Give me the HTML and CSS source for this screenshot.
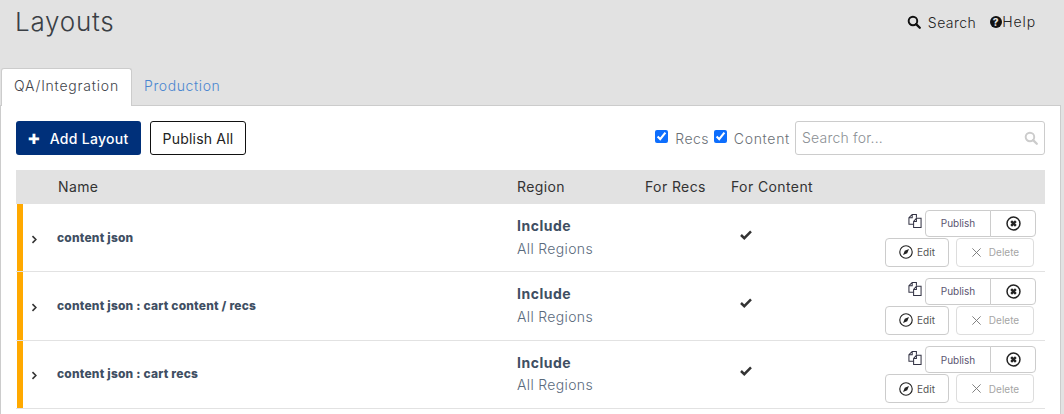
FILE: index.html
```html
<!DOCTYPE html>
<html lang="en">
<head>
<meta charset="utf-8">
<title>Layouts</title>
<link rel="stylesheet" href="styles.css">
</head>
<body>
<svg class="defs" width="0" height="0" aria-hidden="true">
  <defs>
    <symbol id="i-search" viewBox="0 0 16 16"><circle cx="6.8" cy="6.8" r="4.9" fill="none" stroke="currentColor" stroke-width="2.2"/><path d="M10.4 10.4L14.6 14.6" stroke="currentColor" stroke-width="2.6" stroke-linecap="round"/></symbol>
    <symbol id="i-copy" viewBox="0 0 15 16"><path d="M9 4.5V1H4.5L1 4.5v7h5M4.5 1v3.5H1" fill="none" stroke="currentColor" stroke-width="1.1"/><path d="M9 5h5v10H6V8.5zM9 5v3.5H6" fill="none" stroke="currentColor" stroke-width="1.1"/></symbol>
    <symbol id="i-xc" viewBox="0 0 16 16"><circle cx="8" cy="8" r="6.9" fill="none" stroke="currentColor" stroke-width="1.6"/><path d="M5.5 5.5l5 5M10.5 5.5l-5 5" stroke="currentColor" stroke-width="2.6"/></symbol>
    <symbol id="i-edit" viewBox="0 0 16 16"><circle cx="8" cy="8" r="7.1" fill="none" stroke="currentColor" stroke-width="1.3"/><path d="M11.4 4.6L9.4 9.4 4.6 11.4 6.6 6.6z" fill="currentColor"/></symbol>
    <symbol id="i-x" viewBox="0 0 12 12"><path d="M1.5 1.5l9 9M10.5 1.5l-9 9" stroke="currentColor" stroke-width="1" fill="none"/></symbol>
    <symbol id="i-check" viewBox="0 0 12 10"><path d="M1 5l3.3 3.2L11 1.4" fill="none" stroke="currentColor" stroke-width="2.5"/></symbol>
    <symbol id="i-chev" viewBox="0 0 6 8"><path d="M1.2 1l3 3-3 3" fill="none" stroke="currentColor" stroke-width="1.4"/></symbol>
  </defs>
</svg>

<header class="top">
  <h1 class="title">Layouts</h1>
  <nav class="top-links">
    <a class="top-link"><svg class="ico-search"><use href="#i-search"/></svg>Search</a>
    <a class="top-link help"><span class="help-ico">?</span>Help</a>
  </nav>
</header>

<div class="tabs">
  <div class="tab active">QA/Integration</div>
  <div class="tab">Production</div>
</div>

<main class="panel">
  <div class="toolbar">
    <button class="btn primary"><span class="plus">✚</span>Add Layout</button>
    <button class="btn outline">Publish All</button>
    <div class="filters">
      <input type="checkbox" class="chk" checked aria-label="Recs"><span class="chk-label recs">Recs</span>
      <input type="checkbox" class="chk" checked aria-label="Content"><span class="chk-label content">Content</span>
      <div class="search-box"><span>Search for...</span><svg class="ico-sb"><use href="#i-search"/></svg></div>
    </div>
  </div>

  <div class="table">
    <div class="row head">
      <div></div><div class="head-name">Name</div><div>Region</div><div>For Recs</div><div>For Content</div><div></div>
    </div>

    <div class="row item">
      <div class="chev-cell"><svg class="chev"><use href="#i-chev"/></svg></div>
      <div class="name">content json</div>
      <div class="region"><b>Include</b><span>All Regions</span></div>
      <div></div>
      <div class="check-cell"><svg class="check"><use href="#i-check"/></svg></div>
      <div class="actions">
        <div class="act-line">
          <svg class="copy"><use href="#i-copy"/></svg>
          <button class="mini pub">Publish</button><button class="mini xbtn"><svg class="xc"><use href="#i-xc"/></svg></button>
        </div>
        <div class="act-line second">
          <button class="mini edit"><svg class="ed"><use href="#i-edit"/></svg>Edit</button>
          <button class="mini del"><svg class="dx"><use href="#i-x"/></svg>Delete</button>
        </div>
      </div>
    </div>

    <div class="row item">
      <div class="chev-cell"><svg class="chev"><use href="#i-chev"/></svg></div>
      <div class="name">content json : cart content / recs</div>
      <div class="region"><b>Include</b><span>All Regions</span></div>
      <div></div>
      <div class="check-cell"><svg class="check"><use href="#i-check"/></svg></div>
      <div class="actions">
        <div class="act-line">
          <svg class="copy"><use href="#i-copy"/></svg>
          <button class="mini pub">Publish</button><button class="mini xbtn"><svg class="xc"><use href="#i-xc"/></svg></button>
        </div>
        <div class="act-line second">
          <button class="mini edit"><svg class="ed"><use href="#i-edit"/></svg>Edit</button>
          <button class="mini del"><svg class="dx"><use href="#i-x"/></svg>Delete</button>
        </div>
      </div>
    </div>

    <div class="row item">
      <div class="chev-cell"><svg class="chev"><use href="#i-chev"/></svg></div>
      <div class="name">content json : cart recs</div>
      <div class="region"><b>Include</b><span>All Regions</span></div>
      <div></div>
      <div class="check-cell"><svg class="check"><use href="#i-check"/></svg></div>
      <div class="actions">
        <div class="act-line">
          <svg class="copy"><use href="#i-copy"/></svg>
          <button class="mini pub">Publish</button><button class="mini xbtn"><svg class="xc"><use href="#i-xc"/></svg></button>
        </div>
        <div class="act-line second">
          <button class="mini edit"><svg class="ed"><use href="#i-edit"/></svg>Edit</button>
          <button class="mini del"><svg class="dx"><use href="#i-x"/></svg>Delete</button>
        </div>
      </div>
    </div>
  </div>
</main>
</body>
</html>
```
FILE: styles.css
```css
* { box-sizing: border-box; }
html, body { margin: 0; height: 414px; overflow: hidden; }
body {
  width: 1064px;
  background: #e2e2e2;
  font-family: "Inter", "Liberation Sans", sans-serif;
  font-size: 14px;
  color: #333;
}
.defs { position: absolute; }
button { font-family: inherit; cursor: pointer; }

.top { height: 68px; display: flex; justify-content: space-between; padding: 5px 28px 0 15px; }
.title { margin: 0; font-size: 26px; font-weight: 300; line-height: 34px; color: #3a3f45; letter-spacing: .75px; }
.top-links { display: flex; gap: 14px; padding-top: 7px; height: 27px; align-items: center; }
.top-link { display: flex; align-items: center; font-size: 14px; color: #222; font-weight: 300; letter-spacing: .45px; }
.ico-search { width: 14px; height: 14px; margin-right: 7px; color: #111; }
.help { margin-top: -1px; letter-spacing: .9px; }
.help-ico {
  width: 12px; height: 12px; border-radius: 50%; background: #111; color: #e2e2e2;
  font-size: 10px; font-weight: 800; line-height: 12px; text-align: center; margin-right: 0;
}

.tabs { display: flex; height: 37px; padding-left: 1px; position: relative; z-index: 1; }
.tab { padding: 0 12px; font-size: 14px; line-height: 36px; color: #4a86d0; font-weight: 300; letter-spacing: .6px; }
.tab.active {
  width: 131px; background: #fff; color: #3f444a; border: 1px solid #ccc; border-bottom: 0;
  border-radius: 3px 3px 0 0; height: 38px; padding: 0 12px; line-height: 34px; letter-spacing: .78px;
}

.panel {
  width: 1061px; height: 309px; background: #fff;
  border: 1px solid #ccc; border-width: 1px 1px 0 1px; padding: 15px 15px 0 15px;
}
.toolbar { display: flex; align-items: center; height: 34px; }
.btn { height: 34px; border-radius: 3px; font-size: 14px; letter-spacing: .2px; padding: 0; }
.btn.primary {
  width: 125px; background: #00307a; color: #fff; border: 0; margin-right: 9px; font-weight: 500;
  display: flex; align-items: center; justify-content: center; letter-spacing: .3px;
}
.plus { font-size: 14px; margin-right: 9px; }
.btn.outline { width: 96px; background: #fff; color: #222; border: 1px solid #111; }
.filters { margin-left: auto; display: flex; align-items: center; }
.chk { width: 13px; height: 13px; margin: 0 7px 3px 0; accent-color: #0d6efd; }
.chk-label { color: #6a6f75; font-weight: 300; font-size: 14px; }
.recs { letter-spacing: .4px; margin-right: 5px; }
.content { letter-spacing: .7px; margin-right: 5px; }
.search-box {
  width: 250px; height: 34px; border: 1px solid #ccc; border-radius: 3px; display: flex; align-items: center;
  justify-content: space-between; padding: 0 6px 1px; color: #8b8f94; font-size: 14px; font-weight: 300; letter-spacing: .2px;
}
.ico-sb { width: 14px; height: 14px; color: #ccc; }

.table { margin-top: 15px; width: 1029px; }
.row {
  display: grid;
  grid-template-columns: 41px 460px 128px 86px 1fr 200px;
  align-items: center;
}
.row.head { height: 34px; padding-bottom: 1px; background: #e2e2e2; color: #333; font-size: 14px; letter-spacing: .4px; }
.head-name { padding-left: 1px; }
.row.item {
  height: 68.33px; border-bottom: 1px solid #e2e2e2; position: relative;
}
.row.item::before {
  content: ""; position: absolute; left: 1px; top: 0; bottom: 0; width: 6px; background: #ffa900;
}
.chev-cell { padding-left: 15px; display: flex; align-items: center; padding-top: 3px; }
.chev { width: 7px; height: 9px; color: #333; }
.name { font-size: 12px; font-weight: 800; color: #3f4f63; letter-spacing: .2px; margin-top: -1px; }
.region { display: flex; flex-direction: column; line-height: 22.5px; color: #5a6a7c; font-weight: 300; font-size: 14px; letter-spacing: .35px; }
.region b { color: #3f4f63; font-weight: 700; letter-spacing: .5px; }
.check-cell { padding-left: 9px; display: flex; margin-top: -6px; }
.check { width: 12px; height: 10px; color: #333; }

.actions { display: flex; flex-direction: column; align-items: flex-end; padding-right: 9px; margin-top: 1px; }
.act-line { display: flex; align-items: center; }
.act-line.second { margin-top: 1px; padding-right: 2px; }
.mini {
  height: 27px; background: #fff; border: 1px solid #ccc; border-radius: 4px; font-size: 10px; color: #555; padding: 0;
  display: flex; align-items: center; justify-content: center;
}
.copy { width: 14px; height: 16px; color: #334; margin-right: 3px; margin-top: -4px; }
.pub { width: 66px; border-radius: 4px 0 0 4px; color: #5b5470; }
.xbtn { width: 46px; border-radius: 0 4px 4px 0; margin-left: -1px; color: #222; }
.xc { width: 15px; height: 15px; }
.edit { width: 64px; height: 29px; margin-right: 7px; color: #555; }
.ed { width: 14px; height: 14px; margin-right: 4px; color: #222; }
.del { width: 78px; height: 29px; color: #a5a5a5; border-color: #ddd; }
.dx { width: 11px; height: 11px; margin-right: 7px; color: #777; }
```
